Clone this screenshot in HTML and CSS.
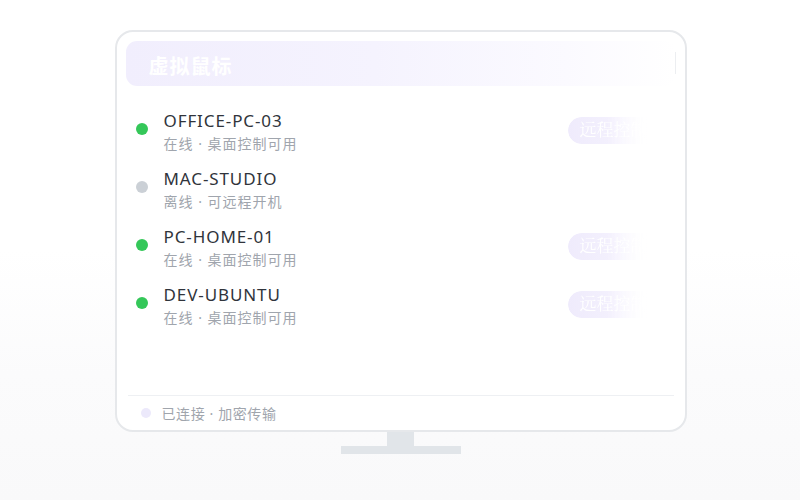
FILE: index.html
```html
<!DOCTYPE html>
<html lang="zh">
<head>
<meta charset="utf-8">
<link rel="stylesheet" href="styles.css">
</head>
<body>
<div class="scene">
  <div class="monitor">
    <div class="screen">
      <div class="header"><span class="title">虚拟鼠标</span><span class="header-edge"></span></div>
      <div class="list">
        <div class="row">
          <span class="dot on"></span>
          <div class="info"><div class="name">OFFICE-PC-03</div><div class="sub">在线 · 桌面控制可用</div></div>
          <span class="btn">远程控制</span>
        </div>
        <div class="row">
          <span class="dot off"></span>
          <div class="info"><div class="name">MAC-STUDIO</div><div class="sub">离线 · 可远程开机</div></div>
        </div>
        <div class="row">
          <span class="dot on"></span>
          <div class="info"><div class="name">PC-HOME-01</div><div class="sub">在线 · 桌面控制可用</div></div>
          <span class="btn">远程控制</span>
        </div>
        <div class="row">
          <span class="dot on"></span>
          <div class="info"><div class="name">DEV-UBUNTU</div><div class="sub">在线 · 桌面控制可用</div></div>
          <span class="btn">远程控制</span>
        </div>
      </div>
      <div class="footer"><span class="fdot"></span><span class="ftext">已连接 · 加密传输</span></div>
    </div>
    <div class="neck"></div>
    <div class="base"></div>
  </div>
</div>
</body>
</html>
```

FILE: styles.css
```css
* { box-sizing: border-box; }
html, body { margin: 0; padding: 0; }
body {
  width: 800px; height: 500px; overflow: hidden;
  font-family: "Noto Sans", "Noto Sans CJK SC", sans-serif;
  background: linear-gradient(180deg, #ffffff 0%, #ffffff 50%, #fbfbfc 75%, #f9f9fa 100%);
}
.scene { padding-top: 30px; display: flex; justify-content: center; }
.monitor { display: flex; flex-direction: column; align-items: center; margin-left: 1px; }
.screen {
  width: 572px; height: 402px;
  border: 2px solid #e6e8eb;
  border-radius: 18px;
  padding: 9px 9px 0;
  display: flex; flex-direction: column;
  background: #fff;
}
.header {
  height: 45px; border-radius: 11px;
  background: linear-gradient(90deg, #f1eefd 0%, #f5f3fe 45%, #fbfaff 80%, #ffffff 100%);
  display: flex; align-items: center; padding-left: 23px; padding-top: 3px;
  position: relative;
}
.title { color: #ffffff; font-family: "Noto Sans CJK SC", sans-serif; font-weight: 700; font-size: 20px; letter-spacing: 1px; }
.header-edge { position: absolute; right: 0; top: 11px; width: 1px; height: 22px; background: #eceef1; }
.list { flex: 1; padding-top: 18px; }
.row { height: 58px; display: flex; align-items: center; padding: 0 12px 0 10px; }
.dot { width: 12px; height: 12px; border-radius: 50%; flex: none; margin-top: -9px; }
.dot.on { background: #34c759; }
.dot.off { background: #cbd0d6; }
.info { margin-left: 16px; margin-top: -2px; }
.name { font-size: 17px; line-height: 22px; color: #30343b; letter-spacing: 0.9px; }
.sub { font-family: "Noto Sans", "Noto Sans CJK SC", sans-serif; font-size: 14px; line-height: 22px; margin-top: 1px; color: #a0a5ad; letter-spacing: 1px; }
.btn {
  margin-left: auto; width: 96px; height: 27px; border-radius: 14px;
  background: linear-gradient(90deg, #efebfc 0%, #f3f0fd 45%, rgba(255,255,255,0) 85%);
  color: #ffffff; font-family: "Liberation Serif", "Noto Serif CJK SC", serif; font-size: 17px;
  line-height: 27px; padding-left: 12px; white-space: nowrap; overflow: hidden;
  -webkit-mask-image: linear-gradient(90deg, #000 40%, rgba(0,0,0,0.2) 80%, transparent 100%);
  mask-image: linear-gradient(90deg, #000 40%, rgba(0,0,0,0.2) 80%, transparent 100%);
  margin-top: -6px;
}
.footer { height: 35px; margin: 0 2px; border-top: 1px solid #eef0f3; display: flex; align-items: center; padding-left: 13px; }
.fdot { width: 10px; height: 10px; border-radius: 50%; background: #ece9fb; }
.ftext { margin-left: 11px; font-family: "Noto Sans", "Noto Sans CJK SC", sans-serif; font-size: 14px; color: #a0a5ad; letter-spacing: 0.6px; }
.neck { width: 27px; height: 14px; background: #e1e5e9; }
.base { width: 120px; height: 8px; background: #e1e5e9; }
```
